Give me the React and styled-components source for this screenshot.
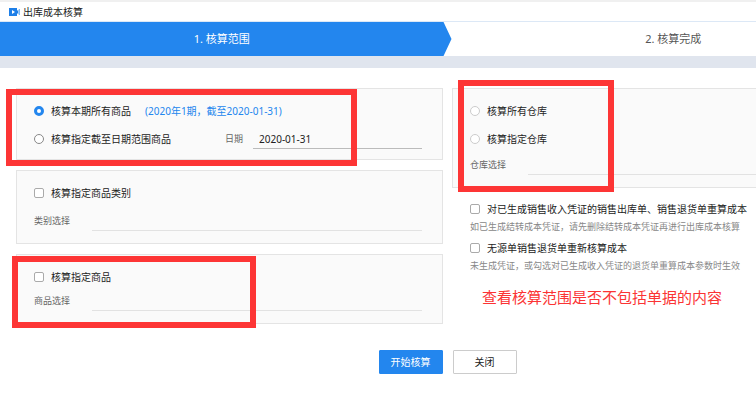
import styled, { createGlobalStyle } from "styled-components";
import { useState } from "react";

function Choice({ type = "checkbox", name, label, checked, muted, onChange }) {
    return (
        <ChoiceLabel>
            <Mark type={type} name={name} checked={checked} onChange={onChange} $muted={muted} />
            {label}
        </ChoiceLabel>
    );
}

function PickField({ id, label, space }) {
    return (
        <Row $space={space}>
            <FieldLabel htmlFor={id} $wide>{label}</FieldLabel>
            <LineInput id={id} type="text" />
        </Row>
    );
}

function App() {
    const [range, setRange] = useState("all");
    const [store, setStore] = useState(null);
    const [date, setDate] = useState("2020-01-31");
    const [options, setOptions] = useState({});

    const toggle = (key) => {
        setOptions({ ...options, [key]: !options[key] });
    };

    return (
        <>
            <GlobalStyle />
            <Viewport>
                <Dialog>
                    <TitleBar>
                        <svg width="11" height="8" viewBox="0 0 11 8" aria-hidden="true">
                            <path d="M0 0h8v8H0zM8 3l1.4-1.6V6.6L8 5z" fill="#1e7fe8" />
                            <path d="M9.9 1h1v6h-1z" fill="#6fb0f3" />
                            <path d="M3 2l3 2-3 2z" fill="#fff" />
                        </svg>
                        <Title>出库成本核算</Title>
                    </TitleBar>

                    <Steps>
                        <Step $active>1. 核算范围</Step>
                        <Step>2. 核算完成</Step>
                    </Steps>

                    <Content>
                        <Column>
                            <Panel $bottom={10}>
                                <Row>
                                    <Choice
                                        type="radio"
                                        name="range"
                                        label="核算本期所有商品"
                                        checked={range === "all"}
                                        onChange={() => setRange("all")}
                                    />
                                    <Period>(2020年1期，截至2020-01-31)</Period>
                                </Row>
                                <Row $space={8}>
                                    <Choice
                                        type="radio"
                                        name="range"
                                        label="核算指定截至日期范围商品"
                                        checked={range === "date"}
                                        onChange={() => setRange("date")}
                                    />
                                    <DateField>
                                        <FieldLabel htmlFor="date">日期</FieldLabel>
                                        <LineInput
                                            id="date"
                                            type="text"
                                            value={date}
                                            onChange={(e) => setDate(e.target.value)}
                                            $strong
                                        />
                                    </DateField>
                                </Row>
                                <Highlight $left={-11} $top={0} $width={351} $height={77} />
                            </Panel>

                            <Panel $bottom={12}>
                                <Row>
                                    <Choice
                                        label="核算指定商品类别"
                                        checked={!!options.category}
                                        onChange={() => toggle("category")}
                                    />
                                </Row>
                                <PickField id="category" label="类别选择" space={8} />
                            </Panel>

                            <Panel $bottom={12}>
                                <Row>
                                    <Choice
                                        label="核算指定商品"
                                        checked={!!options.goods}
                                        onChange={() => toggle("goods")}
                                    />
                                </Row>
                                <PickField id="goods" label="商品选择" space={4} />
                                <Highlight $left={-5} $top={1} $width={244} $height={72} />
                            </Panel>
                        </Column>

                        <Column>
                            <Panel $bottom={12}>
                                <Row>
                                    <Choice
                                        type="radio"
                                        name="store"
                                        label="核算所有仓库"
                                        muted
                                        checked={store === "all"}
                                        onChange={() => setStore("all")}
                                    />
                                </Row>
                                <Row $space={8}>
                                    <Choice
                                        type="radio"
                                        name="store"
                                        label="核算指定仓库"
                                        muted
                                        checked={store === "some"}
                                        onChange={() => setStore("some")}
                                    />
                                </Row>
                                <PickField id="store" label="仓库选择" space={6} />
                                <Highlight $left={5} $top={-9} $width={156} $height={112} />
                            </Panel>

                            <Options>
                                <Choice
                                    label="对已生成销售收入凭证的销售出库单、销售退货单重算成本"
                                    checked={!!options.recalc}
                                    onChange={() => toggle("recalc")}
                                />
                                <Hint>如已生成结转成本凭证，请先删除结转成本凭证再进行出库成本核算</Hint>
                                <Choice
                                    label="无源单销售退货单重新核算成本"
                                    checked={!!options.returns}
                                    onChange={() => toggle("returns")}
                                />
                                <Hint>未生成凭证，或勾选对已生成收入凭证的退货单重算成本参数时生效</Hint>
                                <Remark>查看核算范围是否不包括单据的内容</Remark>
                            </Options>
                        </Column>
                    </Content>

                    <Footer>
                        <Button type="button" $primary>开始核算</Button>
                        <Button type="button">关闭</Button>
                    </Footer>
                </Dialog>
            </Viewport>
        </>
    );
}

const GlobalStyle = createGlobalStyle`
  * {
    box-sizing: border-box;
  }

  body {
    margin: 0;
    background: #fff;
    color: #222;
    font-family: "Noto Sans", "Noto Sans CJK SC", sans-serif;
    font-size: 10px;
    line-height: 20px;
  }

  input,
  button {
    font: inherit;
    color: inherit;
  }
`;

const Viewport = styled.div`
  overflow: hidden;
`;

// the dialog is wider than the window and runs past its right edge
const Dialog = styled.main`
  width: calc(100% + 139px);
`;

const TitleBar = styled.header`
  display: flex;
  align-items: center;
  gap: 3px;
  height: 22px;
  padding-left: 9px;
  border-top: 2px solid #f0f0f0;
  border-bottom: 1px solid #dce8f6;
`;

const Title = styled.h1`
  margin: 0;
  font-size: 10px;
  font-weight: 400;
`;

const Steps = styled.ol`
  display: flex;
  margin: 0;
  padding: 0;
  list-style: none;
  border-bottom: 12px solid #e0e5ee;
`;

const Step = styled.li`
  flex: 1;
  height: 34px;
  line-height: 34px;
  font-size: 11px;
  text-align: center;
  padding: ${({ $active }) => ($active ? "0 8px 0 0" : "0")};
  color: ${({ $active }) => ($active ? "#fff" : "#555")};
  background: ${({ $active }) => ($active ? "#2386ee" : "transparent")};
  clip-path: ${({ $active }) =>
        $active ? "polygon(0 0, calc(100% - 8px) 0, 100% 50%, calc(100% - 8px) 100%, 0 100%)" : "none"};
`;

const Content = styled.div`
  display: grid;
  grid-template-columns: repeat(2, minmax(0, 1fr));
  column-gap: 9px;
  padding: 20px 16px 0;
`;

const Column = styled.div`
  display: flex;
  flex-direction: column;
  gap: 10px;
`;

const Panel = styled.section`
  position: relative;
  padding: 12px 20px ${({ $bottom }) => $bottom}px 17px;
  background: #fafafa;
  border: 1px solid #e4e4e4;
`;

const Row = styled.div`
  display: flex;
  align-items: center;
  height: 20px;
  margin-top: ${({ $space }) => $space || 0}px;
`;

const ChoiceLabel = styled.label`
  display: flex;
  align-items: center;
  gap: 7px;
  white-space: nowrap;
`;

const Mark = styled.input`
  appearance: none;
  flex: none;
  width: 10px;
  height: 10px;
  margin: 0;
  background: #fff;
  border: 1px solid ${({ $muted }) => ($muted ? "#ccc" : "#888")};
  border-radius: 50%;

  &[type="checkbox"] {
    border-color: #aaa;
    border-radius: 2px;
  }

  &:checked {
    border: 3px solid #2386ee;
  }
`;

const Period = styled.span`
  margin-left: 14px;
  color: #2386ee;
  white-space: nowrap;
`;

const DateField = styled.div`
  display: flex;
  align-items: center;
  width: 197px;
  margin-left: auto;
`;

const FieldLabel = styled.label`
  flex: none;
  width: ${({ $wide }) => ($wide ? 58 : 28)}px;
  font-size: 9px;
  color: #666;
`;

const LineInput = styled.input`
  flex: 1;
  min-width: 0;
  height: 20px;
  padding: 0 6px;
  background: transparent;
  border: 0;
  border-bottom: 1px solid ${({ $strong }) => ($strong ? "#bbb" : "#e2e2e2")};
  outline: none;
`;

const Options = styled.div`
  padding: 1px 0 0 18px;
`;

const Hint = styled.p`
  margin: 0 0 3px;
  font-size: 9px;
  line-height: 16px;
  color: #888;
  white-space: nowrap;
`;

const Remark = styled.p`
  margin: 13px 0 0 12px;
  font-size: 15px;
  color: #fb3434;
  white-space: nowrap;
`;

const Highlight = styled.div`
  position: absolute;
  left: ${({ $left }) => $left}px;
  top: ${({ $top }) => $top}px;
  width: ${({ $width }) => $width}px;
  height: ${({ $height }) => $height}px;
  border: 6px solid #fd3535;
  pointer-events: none;
`;

const Footer = styled.footer`
  display: flex;
  justify-content: center;
  gap: 10px;
  padding: 26px 0 28px;
`;

const Button = styled.button`
  width: 64px;
  height: 24px;
  padding: 0;
  color: ${({ $primary }) => ($primary ? "#fff" : "#222")};
  background: ${({ $primary }) => ($primary ? "#2386ee" : "#fff")};
  border: 1px solid ${({ $primary }) => ($primary ? "#2386ee" : "#ccc")};
  border-radius: 1px;
`;

export default App;
